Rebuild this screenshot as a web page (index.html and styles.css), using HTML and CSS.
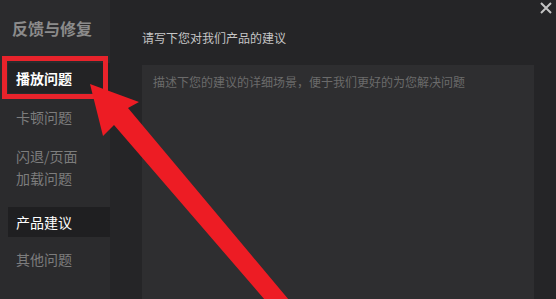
FILE: index.html
```html
<!DOCTYPE html>
<html lang="zh-CN">
<head>
  <meta charset="UTF-8" />
  <meta name="viewport" content="width=device-width, initial-scale=1.0" />
  <title>反馈与修复</title>
  <link rel="stylesheet" href="styles.css">
</head>
<body>
  <div class="app">
    <aside class="sidebar">
      <h2 class="sidebar-title">反馈与修复</h2>
      <ul class="nav">
        <li class="nav-item hover">播放问题</li>
        <li class="nav-item">卡顿问题</li>
        <li class="nav-item wide">闪退/页面<br>加载问题</li>
        <li class="nav-item active">产品建议</li>
        <li class="nav-item">其他问题</li>
      </ul>
    </aside>

    <main class="content">
      <p class="prompt">请写下您对我们产品的建议</p>
      <textarea class="feedback" placeholder="描述下您的建议的详细场景，便于我们更好的为您解决问题"></textarea>
    </main>

    <button class="close" aria-label="关闭">
      <svg width="12" height="12" viewBox="0 0 12 12">
        <path d="M1 1 L11 11 M11 1 L1 11" />
      </svg>
    </button>

    <!-- red annotation drawn over the dialog -->
    <svg class="annotation" width="556" height="299" viewBox="0 0 556 299">
      <rect class="mark" x="4.5" y="58.5" width="101" height="38" />
      <polygon class="arrow" points="90,84 139,102 128,108 289,300 265,300 114,125 103,136" />
    </svg>
  </div>
</body>
</html>
```

FILE: styles.css
```css
body {
  margin: 0;
  background-color: #252527;
  font-family: "Noto Sans CJK SC", "Noto Sans", sans-serif;
}
.app {
  position: relative;
  display: flex;
  height: 299px;
  overflow: hidden;
}
.sidebar {
  flex: none;
  width: 110px;
  background-color: #2b2b2d;
}
.sidebar-title {
  margin: 0;
  padding: 18px 0 0 12px;
  font-size: 16px;
  line-height: 20px;
  font-weight: bold;
  color: #8b8b8b;
}
.nav {
  list-style: none;
  margin: 25px 0 0;
  padding: 0;
}
.nav-item {
  margin: 0 0 9px 8px;
  padding: 4px 8px;
  font-size: 14px;
  line-height: 22px;
  color: #7d7d7d;
}
.nav-item.wide {
  margin-bottom: 14px;
}
.nav-item.hover {
  color: #fff;
  font-weight: bold;
  background-color: #232325;
}
.nav-item.active {
  margin-bottom: 7px;
  color: #fff;
  background-color: #1f1f21;
}
.content {
  flex: 1;
  display: flex;
  flex-direction: column;
  padding: 30px 22px 0 32px;
}
.prompt {
  margin: 0;
  font-size: 12px;
  line-height: 16px;
  color: #c6c6c6;
}
.feedback {
  flex: 1;
  margin-top: 19px;
  padding: 9px 11px;
  border: none;
  outline: none;
  resize: none;
  background-color: #2e2e30;
  color: #c6c6c6;
  font-family: inherit;
  font-size: 12px;
  line-height: 16px;
}
.feedback::placeholder {
  color: #6b6b6b;
}
.close {
  position: absolute;
  top: 2px;
  right: 4px;
  padding: 0;
  border: none;
  background: none;
  line-height: 0;
}
.close path {
  stroke: #c4c4c4;
  stroke-width: 2;
  fill: none;
}
.annotation {
  position: absolute;
  top: 0;
  left: 0;
  pointer-events: none;
}
.mark {
  fill: none;
  stroke: #e8232b;
  stroke-width: 5;
}
.arrow {
  fill: #ed1c24;
}
```
